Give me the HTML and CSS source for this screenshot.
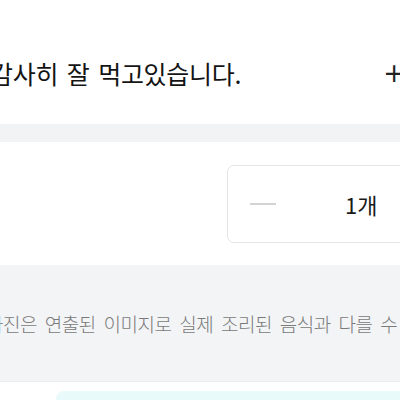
FILE: index.html
```html
<!DOCTYPE html>
<html lang="ko">
<head>
<meta charset="utf-8">
<link rel="stylesheet" href="styles.css">
</head>
<body>
<div class="page">
  <section class="review">
    <p class="review-text">감사히 잘 먹고있습니다.</p>
    <span class="more">+</span>
  </section>
  <div class="gap"></div>
  <section class="qty-section">
    <div class="qty-box">
      <span class="minus"></span>
      <span class="count">1개</span>
    </div>
  </section>
  <section class="notice">
    <p class="notice-text">사진은 연출된 이미지로 실제 조리된 음식과 다를 수 있습니다.</p>
  </section>
  <section class="bottom">
    <div class="promo"></div>
  </section>
</div>
</body>
</html>
```

FILE: styles.css
```css
html, body {
  margin: 0;
  padding: 0;
  background: #ffffff;
}
body {
  width: 400px;
  height: 400px;
  overflow: hidden;
  font-family: "Noto Sans CJK KR", "Noto Sans", sans-serif;
}
.page {
  display: flex;
  flex-direction: column;
}
.review {
  height: 124px;
  display: flex;
  align-items: center;
  justify-content: space-between;
  box-sizing: border-box;
  padding-top: 22px;
  background: #fff;
}
.review-text {
  margin: 0 0 0 -10px;
  font-size: 25px;
  letter-spacing: -0.3px;
  word-spacing: 2px;
  color: #141414;
  white-space: nowrap;
}
.more {
  font-family: "DejaVu Sans", sans-serif;
  font-size: 26px;
  color: #222;
  margin-right: -5px;
  line-height: 1;
}
.gap {
  height: 18px;
  background: #f2f3f5;
}
.qty-section {
  height: 123px;
  background: #fff;
  display: flex;
  align-items: center;
  padding-left: 227px;
  box-sizing: border-box;
}
.qty-box {
  flex: none;
  width: 260px;
  height: 78px;
  box-sizing: border-box;
  border: 1.5px solid #e4e5e8;
  border-radius: 7px;
  display: flex;
  align-items: center;
  padding-left: 22px;
}
.minus {
  width: 26px;
  height: 2px;
  background: #d3d3d6;
}
.count {
  margin-left: 69px;
  font-size: 22px;
  color: #1a1a1a;
}
.notice {
  height: 116px;
  background: #f3f4f6;
  border-bottom: 1px solid #ebecee;
  display: flex;
  align-items: center;
}
.notice-text {
  margin: 0 0 0 -14px;
  font-size: 19px;
  letter-spacing: -0.5px;
  word-spacing: 3px;
  color: #7a7a7a;
  font-weight: 300;
  white-space: nowrap;
}
.bottom {
  height: 30px;
  background: #fff;
  padding: 9px 0 0 56px;
  box-sizing: border-box;
}
.promo {
  height: 30px;
  background: #e9fafa;
  border-radius: 8px 0 0 0;
}
```
